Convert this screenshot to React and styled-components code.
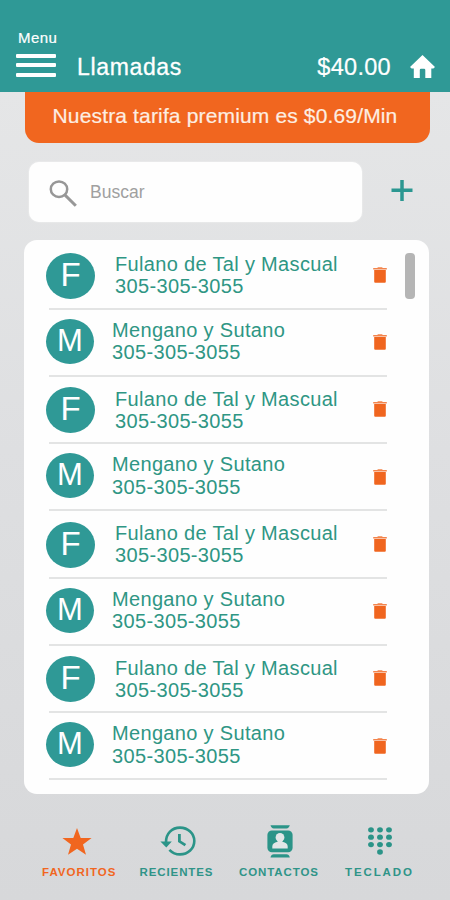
import styled, { createGlobalStyle } from 'styled-components';

const contacts = [
    'Fulano de Tal y Mascual',
    'Mengano y Sutano',
    'Fulano de Tal y Mascual',
    'Mengano y Sutano',
    'Fulano de Tal y Mascual',
    'Mengano y Sutano',
    'Fulano de Tal y Mascual',
    'Mengano y Sutano',
];

export default function App() {
    return (
        <ContainerApp>
            <GlobalStyle />
            <Header>
                <MenuButton>
                    <span>Menu</span>
                    <MenuBars>
                        <i /><i /><i />
                    </MenuBars>
                </MenuButton>
                <Title>Llamadas</Title>
                <Balance>$40.00</Balance>
                <HomeIcon />
            </Header>
            <Banner>Nuestra tarifa premium es $0.69/Min</Banner>
            <SearchRow>
                <SearchBox>
                    <SearchIcon />
                    <span>Buscar</span>
                </SearchBox>
                <PlusIcon />
            </SearchRow>
            <Card>
                <List>
                    {contacts.map((name, i) => (
                        <Contact key={i} name={name} phone="305-305-3055" />
                    ))}
                </List>
                <ScrollThumb />
            </Card>
            <NavBar>
                <NavItem $width={70} $spacing={1} $active>
                    <StarIcon />
                    <span>FAVORITOS</span>
                </NavItem>
                <NavItem $width={77} $spacing={0.9}>
                    <HistoryIcon />
                    <span>RECIENTES</span>
                </NavItem>
                <NavItem $width={81} $spacing={0.9}>
                    <ContactsIcon />
                    <span>CONTACTOS</span>
                </NavItem>
                <NavItem $width={70} $spacing={1.9}>
                    <DialpadIcon />
                    <span>TECLADO</span>
                </NavItem>
            </NavBar>
        </ContainerApp>
    );
}

function Contact({ name, phone }) {
    const narrow = name[0] === 'M';
    return (
        <Row>
            <Avatar $narrow={narrow}>{name[0]}</Avatar>
            <Info $narrow={narrow}>
                <Name>{name}</Name>
                <Phone>{phone}</Phone>
            </Info>
            <TrashIcon />
        </Row>
    );
}

function HomeIcon() {
    return (
        <svg width="25" height="23" viewBox="0 0 25 23" fill="#fff">
            <path d="M12.5 0 L25 12 L23.4 13.4 H21.3 V23 H15.3 V15 Q15.3 13.8 14.1 13.8 H11 Q9.8 13.8 9.8 15 V23 H3.8 V13.4 H1.6 L0 12 Z" />
        </svg>
    );
}

function SearchIcon() {
    return (
        <svg width="28" height="27" viewBox="0 0 28 27" fill="none" stroke="#979797">
            <ellipse cx="10" cy="9.2" rx="8.2" ry="7.8" strokeWidth="2.5" />
            <path d="M15.6 14.6 L26.8 25.8" strokeWidth="3" />
        </svg>
    );
}

function PlusIcon() {
    return (
        <svg width="22" height="21" viewBox="0 0 22 21" stroke="#2b9791" strokeWidth="3.5">
            <path d="M0.5 10.3 H21.5 M11 0 V21" />
        </svg>
    );
}

function TrashIcon() {
    return (
        <svg width="14" height="16" viewBox="0 0 14 16" fill="#f0651f">
            <path d="M0.2 1 H4.2 L5 0.2 H9 L9.8 1 H13.8 V2.6 H0.2 Z" opacity="0.8" />
            <path d="M1.2 3 H12.8 V14.8 Q12.8 15.8 11.8 15.8 H2.2 Q1.2 15.8 1.2 14.8 Z" />
        </svg>
    );
}

function StarIcon() {
    return (
        <svg width="30" height="27" viewBox="0 0 30 27" fill="#f1661f">
            <path d="M15 0 L18.7 9.9 L29.6 10.1 L21 16.6 L24 26.8 L15 20.8 L6 26.8 L9 16.6 L0.4 10.1 L11.3 9.9 Z" />
        </svg>
    );
}

function HistoryIcon() {
    return (
        <svg width="36" height="30" viewBox="0 0 36 30" fill="none" stroke="#2b9488">
            <path d="M6 16 C6 7.5 12 1.6 20 1.6 C28 1.6 34.3 7.5 34.3 15 C34.3 22.5 28 28.4 20 28.4 C15.8 28.4 12.1 26.6 9.4 23.8" strokeWidth="2.6" />
            <path d="M0.4 15.5 H11.8 L6.3 21.6 Z" fill="#2b9488" stroke="none" />
            <path d="M19.4 8 V15.3 L25.4 19.2" strokeWidth="2.8" />
        </svg>
    );
}

function ContactsIcon() {
    return (
        <svg width="26" height="33" viewBox="0 0 26 33" fill="#2b9488">
            <path d="M3.5 0.3 H22.8 Q22 3.4 19.5 3.4 H6.8 Q4.2 3.4 3.5 0.3 Z" />
            <path d="M3.5 32.4 Q4.2 29.2 6.8 29.2 H19.5 Q22 29.2 22.8 32.4 Z" />
            <rect x="0.4" y="5.4" width="25.2" height="21.8" rx="4.5" />
            <ellipse cx="13" cy="12.4" rx="4.4" ry="4.3" fill="#e2e6e7" />
            <path d="M10.6 15 H15.4 V16.8 Q20.7 18 20.7 21.4 V23.5 H5.3 V21.4 Q5.3 18 10.6 16.8 Z" fill="#e2e6e7" />
        </svg>
    );
}

function DialpadIcon() {
    const dots = [];
    for (let y = 0; y < 3; y++) {
        for (let x = 0; x < 3; x++) {
            dots.push([3 + x * 9, 2.8 + y * 7.4]);
        }
    }
    dots.push([12, 25]);
    return (
        <svg width="24" height="28" viewBox="0 0 24 28" fill="#2b9488">
            {dots.map(([x, y]) => (
                <ellipse key={`${x}-${y}`} cx={x} cy={y} rx="2.9" ry="2.65" />
            ))}
        </svg>
    );
}

const GlobalStyle = createGlobalStyle`
    * {
        box-sizing: border-box;
    }
    body {
        margin: 0;
        font-family: 'Liberation Sans', Arial, sans-serif;
    }
    svg {
        display: block;
        flex-shrink: 0;
    }
`

const ContainerApp = styled.div`
    width: 450px;
    height: 900px;
    overflow: hidden;
    display: flex;
    flex-direction: column;
    background: linear-gradient(180deg, #e5e6e7 10%, #dedfe1 50%, #d7d8da 100%);
`

const Header = styled.header`
    height: 92px;
    flex-shrink: 0;
    padding: 0 15px 14px 16px;
    display: flex;
    align-items: flex-end;
    background: #2f9996;
    color: #fff;
`

const MenuButton = styled.div`
    width: 61px;
    padding-bottom: 1.5px;
    span {
        display: block;
        margin: 0 0 8px 2px;
        font-size: 15px;
        line-height: 17px;
        letter-spacing: 0.4px;
        -webkit-text-stroke: 0.2px #fff;
    }
`

const MenuBars = styled.div`
    width: 40px;
    display: flex;
    flex-direction: column;
    gap: 5.5px;
    i {
        height: 4px;
        border-radius: 1px;
        background: #fff;
    }
`

const Title = styled.h1`
    margin: 0;
    flex: 1;
    font-weight: 400;
    font-size: 23px;
    line-height: 22px;
    letter-spacing: 0.65px;
    -webkit-text-stroke: 0.3px #fff;
`

const Balance = styled.div`
    margin-right: 19px;
    font-size: 23.5px;
    line-height: 22px;
    letter-spacing: 0.3px;
    -webkit-text-stroke: 0.2px #fff;
`

const Banner = styled.div`
    height: 51px;
    flex-shrink: 0;
    margin: 0 20px 0 25px;
    padding: 12px 5px 0 0;
    border-radius: 0 0 14px 14px;
    background: #f1661f;
    color: #fdeee2;
    font-size: 21px;
    line-height: 24px;
    letter-spacing: 0.15px;
    text-align: center;
    white-space: nowrap;
    -webkit-text-stroke: 0.2px #fdeee2;
`

const SearchRow = styled.div`
    height: 60px;
    flex-shrink: 0;
    margin: 19px 37px 0 28.5px;
    display: flex;
    justify-content: space-between;
    svg {
        margin-top: 18px;
    }
`

const SearchBox = styled.div`
    width: 333px;
    height: 60px;
    padding-left: 20.5px;
    display: flex;
    border-radius: 10px;
    background: #fefefe;
    box-shadow: 0 0 2px rgba(255, 255, 255, 0.7);
    span {
        margin: 20px 0 0 13px;
        color: #a0a0a0;
        font-size: 17.5px;
        line-height: 20px;
    }
`

const Card = styled.div`
    height: 554px;
    flex-shrink: 0;
    margin: 17.5px 21.5px 0 23.5px;
    padding: 2.75px 14px 0 22.5px;
    display: flex;
    justify-content: space-between;
    border-radius: 13px;
    background: #fefefe;
`

const List = styled.div`
    width: 341px;
`

const ScrollThumb = styled.div`
    width: 9.5px;
    height: 46px;
    margin-top: 11px;
    border-radius: 4px;
    background: #b5b5b5;
`

const Row = styled.div`
    height: 67.25px;
    display: flex;
    /* the separator starts 3px right of the avatars */
    background: linear-gradient(#e3e4e4, #e3e4e4) 3px 100% / 338px 2px no-repeat;
    svg {
        margin-top: 24.6px;
    }
`

const Avatar = styled.div`
    width: ${({ $narrow }) => ($narrow ? 48 : 49)}px;
    height: ${({ $narrow }) => ($narrow ? 45 : 46)}px;
    margin-top: ${({ $narrow }) => ($narrow ? 9 : 10.7)}px;
    flex-shrink: 0;
    border-radius: 50%;
    background: #2f9996;
    color: #fff;
    font-size: ${({ $narrow }) => ($narrow ? 31 : 33)}px;
    line-height: ${({ $narrow }) => ($narrow ? 44 : 43)}px;
    text-align: center;
`

const Info = styled.div`
    flex: 1;
    margin-top: ${({ $narrow }) => ($narrow ? 9.3 : 10.8)}px;
    padding-left: ${({ $narrow }) => ($narrow ? 18 : 20)}px;
    color: #2f9684;
    font-size: 20px;
    line-height: 22.4px;
    white-space: nowrap;
`

const Name = styled.div`
    letter-spacing: 0.33px;
`

const Phone = styled.div`
    letter-spacing: 0.35px;
`

const NavBar = styled.nav`
    padding: 30px 35px 0 42px;
    display: grid;
    grid-template-columns: 97.5px 99.5px 106px 70px;
`

/* the label may run past the item, the icon stays centred on its width */
const NavItem = styled.div`
    width: ${({ $width }) => $width}px;
    height: 60px;
    display: grid;
    grid-template-columns: 100%;
    grid-template-rows: 35px 26px;
    align-items: center;
    justify-items: center;
    color: ${({ $active }) => ($active ? '#f1661f' : '#2f9488')};
    span {
        justify-self: start;
        font-size: 11.5px;
        font-weight: 700;
        line-height: 14px;
        letter-spacing: ${({ $spacing }) => $spacing}px;
        white-space: nowrap;
    }
`
